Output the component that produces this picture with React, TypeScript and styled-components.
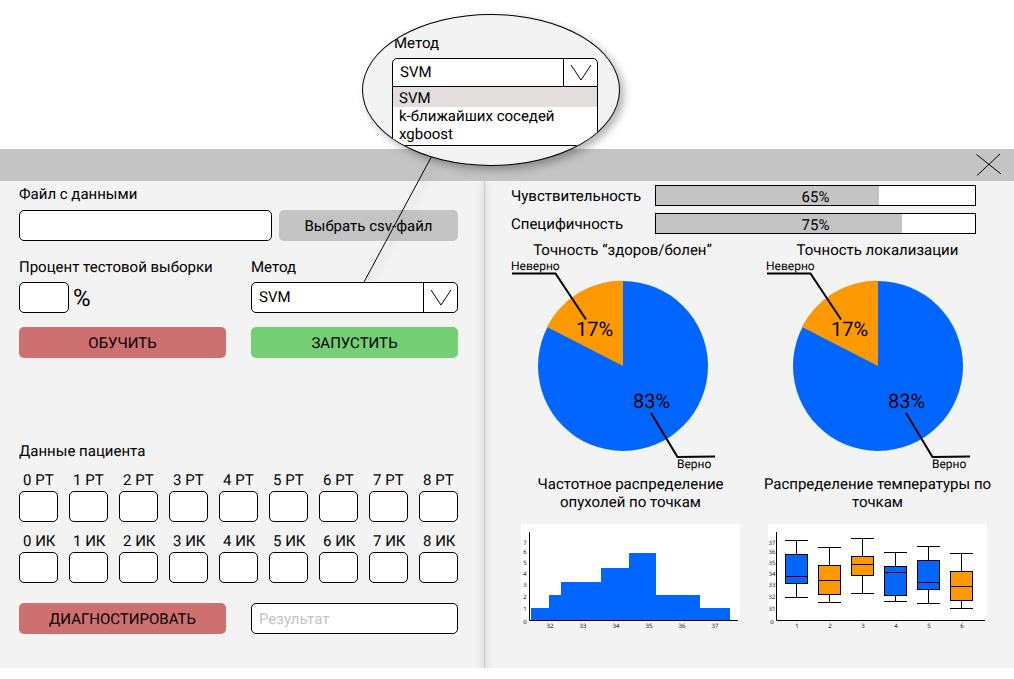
import React, { useId } from "react";
import styled, { createGlobalStyle } from "styled-components";

const GlobalStyle = createGlobalStyle`
  *, *::before, *::after { box-sizing: border-box; }
  body {
    margin: 0;
    background: #fff;
    color: #000;
    font-family: Roboto, "Liberation Sans", sans-serif;
    font-size: 15px;
    line-height: 18px;
    text-rendering: geometricPrecision;
  }
  button, input, select { font: inherit; color: inherit; text-rendering: inherit; }
`;

const Page = styled.div`
  padding-top: 149px;
`;

const TitleBar = styled.header`
  position: relative;
  z-index: 1;
  display: flex;
  justify-content: flex-end;
  align-items: center;
  height: 32px;
  padding-right: 11px;
  background: #c4c4c4;
`;

const CloseButton = styled.button`
  display: flex;
  padding: 0;
  border: 0;
  background: none;
  cursor: pointer;
`;

const Window = styled.main`
  display: grid;
  grid-template-columns: minmax(0, 484fr) 1px minmax(0, 529fr);
  background: #f3f3f3;
`;

const Divider = styled.div`
  background: #c8c8c8;
  box-shadow: 0 2px 8px 1px rgba(0, 0, 0, 0.2);
`;

const ControlPanel = styled.section`
  position: relative;
  z-index: 2;
  padding: 4px 26px 34px 19px;
`;

const Row = styled.div<{ $gap: number; $top?: number }>`
  display: flex;
  align-items: flex-end;
  gap: ${(p) => p.$gap}px;
  margin-top: ${(p) => p.$top ?? 0}px;
`;

const Field = styled.div<{ $grow?: number; $gap?: number }>`
  display: flex;
  flex: ${(p) => p.$grow ?? 1} 1 0;
  flex-direction: column;
  gap: ${(p) => p.$gap ?? 6}px;
  min-width: 0;
`;

const TextInput = styled.input<{ $width?: string }>`
  width: ${(p) => p.$width ?? "100%"};
  height: 31px;
  padding: 0 7px;
  border: 1px solid #000;
  border-radius: 5px;
  background: #fff;
  &::placeholder { color: #c4c4c4; opacity: 1; }
`;

const Percent = styled.span`
  font-size: 24px;
  line-height: 30px;
`;

const tones = { gray: "#c4c4c4", red: "#ce7070", green: "#75d075" };

const ActionButton = styled.button<{ $tone: keyof typeof tones; $grow?: number }>`
  flex: ${(p) => p.$grow ?? 1} 1 0;
  min-width: 0;
  height: 31px;
  padding: 0;
  border: 0;
  border-radius: 5px;
  background: ${(p) => tones[p.$tone]};
  cursor: pointer;
`;

const SelectBox = styled.div<{ $open?: boolean }>`
  position: relative;
  display: flex;
  height: ${(p) => (p.$open ? 29 : 31)}px;
  border: 1px solid #000;
  border-radius: ${(p) => (p.$open ? "5px 5px 0 0" : "5px")};
  background: #fff;
`;

const Select = styled.select`
  flex: 1;
  min-width: 0;
  padding: 0 40px 1px 7px;
  border: 0;
  background: none;
  appearance: none;
`;

const Arrow = styled.span`
  position: absolute;
  inset: 0 0 0 auto;
  display: flex;
  align-items: center;
  justify-content: center;
  width: 34px;
  border-left: 1px solid #000;
  pointer-events: none;
`;

const Anchor = styled.div`
  position: relative;
`;

const Magnifier = styled.div`
  position: absolute;
  left: 111px;
  bottom: 31px;
  width: 258px;
  height: 268px;
  pointer-events: none;
`;

const Leader = styled.svg`
  position: absolute;
  inset: 0;
  filter: drop-shadow(4px 4px 4px rgba(0, 0, 0, 0.25));
`;

const Lens = styled.div`
  position: relative;
  display: flex;
  flex-direction: column;
  height: 152px;
  padding: 19px 21px 0 29px;
  overflow: hidden;
  border: 1px solid #000;
  border-radius: 50%;
  background: #f3f3f3;
  box-shadow: 4px 4px 8px rgba(0, 0, 0, 0.3);
`;

const LensLabel = styled.label`
  margin-bottom: 6px;
  padding-left: 2px;
`;

const OptionList = styled.ul`
  margin: 0;
  padding: 0 0 2px;
  border: solid #000;
  border-width: 0 1px 1px;
  background: #fff;
  list-style: none;
`;

const Option = styled.li<{ $active?: boolean }>`
  padding: ${(p) => (p.$active ? "2px 6px 0" : "0 6px")};
  background: ${(p) => (p.$active ? "#e3dede" : "none")};
`;

const PatientTitle = styled.h2`
  margin: 84px 0 11px;
  font: inherit;
`;

const PointGrid = styled.div`
  display: grid;
  grid-template-columns: repeat(9, minmax(0, 1fr));
  gap: 10px 11px;
`;

const PointLabel = styled.label`
  display: flex;
  flex-direction: column;
  gap: 2px;
  white-space: nowrap;
  span { padding-left: 4px; }
`;

const ResultPanel = styled.section`
  padding: 4px 25px 38px 26px;
`;

const Metric = styled.div`
  display: flex;
  align-items: center;
  height: 21px;
  margin: 0 13px 7px 0;
`;

const MetricName = styled.span`
  width: 144px;
`;

const Meter = styled.div`
  position: relative;
  flex: 1;
  height: 21px;
  border: 1px solid #000;
  background: #fff;
`;

const MeterFill = styled.div`
  height: 100%;
  background: #c4c4c4;
`;

const MeterText = styled.span`
  position: absolute;
  inset: 2px 0 0;
  text-align: center;
`;

const Figures = styled.div<{ $inset?: boolean }>`
  display: flex;
  justify-content: space-between;
  margin: ${(p) => (p.$inset ? "3px 2px 0 10px" : "0")};
`;

const Figure = styled.figure`
  display: flex;
  flex-direction: column;
  align-items: center;
  margin: 0;
`;

const Caption = styled.figcaption<{ $wide?: boolean }>`
  width: ${(p) => (p.$wide ? "235px" : "auto")};
  margin: ${(p) => (p.$wide ? "0 -8px 13px" : "0")};
  text-align: center;
`;

const Drawing = styled.svg`
  display: block;
  overflow: visible;
`;

const Tick = styled.text`
  font-family: "Open Sans", sans-serif;
  font-size: 6px;
  text-anchor: middle;
`;

const BLUE = "#0066ff";
const ORANGE = "#fc9900";
const METHODS = ["SVM", "k-ближайших соседей", "xgboost"];

function Chevron() {
  return (
    <Arrow>
      <svg width="22" height="17" viewBox="0 0 22 17" fill="none" stroke="#000" aria-hidden="true">
        <path d="M1 1 L11 16 L21 1" />
      </svg>
    </Arrow>
  );
}

function MethodSelect({ id, open }: { id: string; open?: boolean }) {
  return (
    <SelectBox $open={open}>
      <Select id={id} defaultValue="SVM">
        {METHODS.map((m) => <option key={m}>{m}</option>)}
      </Select>
      <Chevron />
    </SelectBox>
  );
}

function MethodMagnifier() {
  return (
    <Magnifier>
      <Leader width="258" height="268" stroke="#000" aria-hidden="true">
        <line x1="2" y1="268" x2="72" y2="138" />
      </Leader>
      <Lens>
        <LensLabel htmlFor="method-open">Метод</LensLabel>
        <MethodSelect id="method-open" open />
        <OptionList>
          {METHODS.map((m, i) => <Option key={m} $active={i === 0}>{m}</Option>)}
        </OptionList>
      </Lens>
    </Magnifier>
  );
}

function MetricRow({ name, value, fill }: { name: string; value: number; fill: number }) {
  const id = useId();
  return (
    <Metric>
      <MetricName id={id}>{name}</MetricName>
      <Meter role="progressbar" aria-labelledby={id} aria-valuenow={value}>
        <MeterFill style={{ width: `${fill}%` }} />
        <MeterText>{value}%</MeterText>
      </Meter>
    </Metric>
  );
}

function Pie({ title }: { title: string }) {
  return (
    <Figure>
      <Caption>{title}</Caption>
      <Drawing width="223" height="213">
        <circle cx="112" cy="107" r="85" fill={BLUE} />
        <path d="M112 107 L36 68 A85.500 85.500 0 0 1 112 21.500 Z" fill={ORANGE} />
        <g fill="none" stroke="#000" strokeWidth="2">
          <path d="M1 14.500 H44.500 L75 60.500" />
          <path d="M140 154 L166.500 198 L204 197.500" />
        </g>
        <text x="0" y="11" fontSize="12">Неверно</text>
        <text x="65" y="77" fontSize="20">17%</text>
        <text x="122" y="149" fontSize="20">83%</text>
        <text x="166" y="209" fontSize="12">Верно</text>
      </Drawing>
    </Figure>
  );
}

const TICK_Y = [19, 28, 39, 50, 61, 73, 85, 98];
const TICK_X = [29, 62, 95, 128, 161, 194];

function Plot({ caption, yLabels, xLabels, children }: {
  caption: string; yLabels: number[]; xLabels: number[]; children: React.ReactNode;
}) {
  return (
    <Figure>
      <Caption $wide>{caption}</Caption>
      <Drawing width="219" height="106">
        <rect width="219" height="97" fill="#fff" />
        {children}
        <path d="M8.500 8 V96.500 H217" fill="none" stroke="#000" />
        {yLabels.map((n, i) => <Tick key={n} x="4" y={TICK_Y[i] + 2}>{n}</Tick>)}
        {xLabels.map((n, i) => <Tick key={n} x={TICK_X[i]} y="104">{n}</Tick>)}
      </Drawing>
    </Figure>
  );
}

// upper whisker, box top, median, box bottom, lower whisker
const BOXES = [
  [16, 30, 52, 59, 73],
  [23, 41, 56, 70, 78],
  [14, 32, 40, 51, 69],
  [28, 42, 48, 71, 77],
  [22, 36, 58, 65, 79],
  [29, 47, 62, 76, 84],
];
const BOX_FILLS = [BLUE, ORANGE, ORANGE, BLUE, BLUE, ORANGE];

export default function App() {
  return (
    <Page>
      <GlobalStyle />
      <TitleBar>
        <CloseButton aria-label="Закрыть">
          <svg width="28" height="24" viewBox="0 0 28 24" stroke="#000" aria-hidden="true">
            <path d="M1.500 1.500 L26 21 M25 1 L2 22.500" />
          </svg>
        </CloseButton>
      </TitleBar>
      <Window>
        <ControlPanel>
          <Row $gap={7}>
            <Field $grow={253} $gap={7}>
              <label htmlFor="file">Файл с данными</label>
              <TextInput id="file" />
            </Field>
            <ActionButton $tone="gray" $grow={179}>Выбрать csv-файл</ActionButton>
          </Row>
          <Row $gap={25} $top={17}>
            <Field>
              <label htmlFor="share">Процент тестовой выборки</label>
              <Row $gap={4}>
                <TextInput id="share" $width="50px" />
                <Percent>%</Percent>
              </Row>
            </Field>
            <Field>
              <label htmlFor="method">Метод</label>
              <Anchor>
                <MethodMagnifier />
                <MethodSelect id="method" />
              </Anchor>
            </Field>
          </Row>
          <Row $gap={25} $top={14}>
            <ActionButton $tone="red">ОБУЧИТЬ</ActionButton>
            <ActionButton $tone="green">ЗАПУСТИТЬ</ActionButton>
          </Row>
          <PatientTitle>Данные пациента</PatientTitle>
          <PointGrid>
            {["РТ", "ИК"].map((kind) =>
              Array.from({ length: 9 }, (_, i) => (
                <PointLabel key={kind + i}>
                  <span>{i} {kind}</span>
                  <TextInput />
                </PointLabel>
              )),
            )}
          </PointGrid>
          <Row $gap={25} $top={20}>
            <ActionButton $tone="red">ДИАГНОСТИРОВАТЬ</ActionButton>
            <Field>
              <TextInput aria-label="Результат" placeholder="Результат" />
            </Field>
          </Row>
        </ControlPanel>
        <Divider />
        <ResultPanel>
          <MetricRow name="Чувствительность" value={65} fill={70} />
          <MetricRow name="Специфичность" value={75} fill={77} />
          <Figures>
            <Pie title="Точность “здоров/болен”" />
            <Pie title="Точность локализации" />
          </Figures>
          <Figures $inset>
            <Plot
              caption="Частотное распределение опухолей по точкам"
              yLabels={[7, 6, 5, 4, 3, 2, 1, 0]}
              xLabels={[32, 33, 34, 35, 36, 37]}
            >
              <path
                d="M10 97 V84 H28 V71 H40 V58 H80 V44 H108 V29 H135 V71 H179 V84 H209 V97 Z"
                fill={BLUE}
              />
            </Plot>
            <Plot
              caption="Распределение температуры по точкам"
              yLabels={[37, 36, 35, 34, 33, 32, 31, 0]}
              xLabels={[1, 2, 3, 4, 5, 6]}
            >
              {BOXES.map(([top, q3, median, q1, bottom], i) => (
                <g key={i} transform={`translate(${17 + i * 33} 0.500)`} stroke="#000">
                  <path d={`M0 ${top} H23 M11.500 ${top} V${bottom} M0 ${bottom} H23`} />
                  <rect x="0.500" y={q3} width="22" height={q1 - q3} fill={BOX_FILLS[i]} />
                  <path d={`M0 ${median} H23`} />
                </g>
              ))}
            </Plot>
          </Figures>
        </ResultPanel>
      </Window>
    </Page>
  );
}
